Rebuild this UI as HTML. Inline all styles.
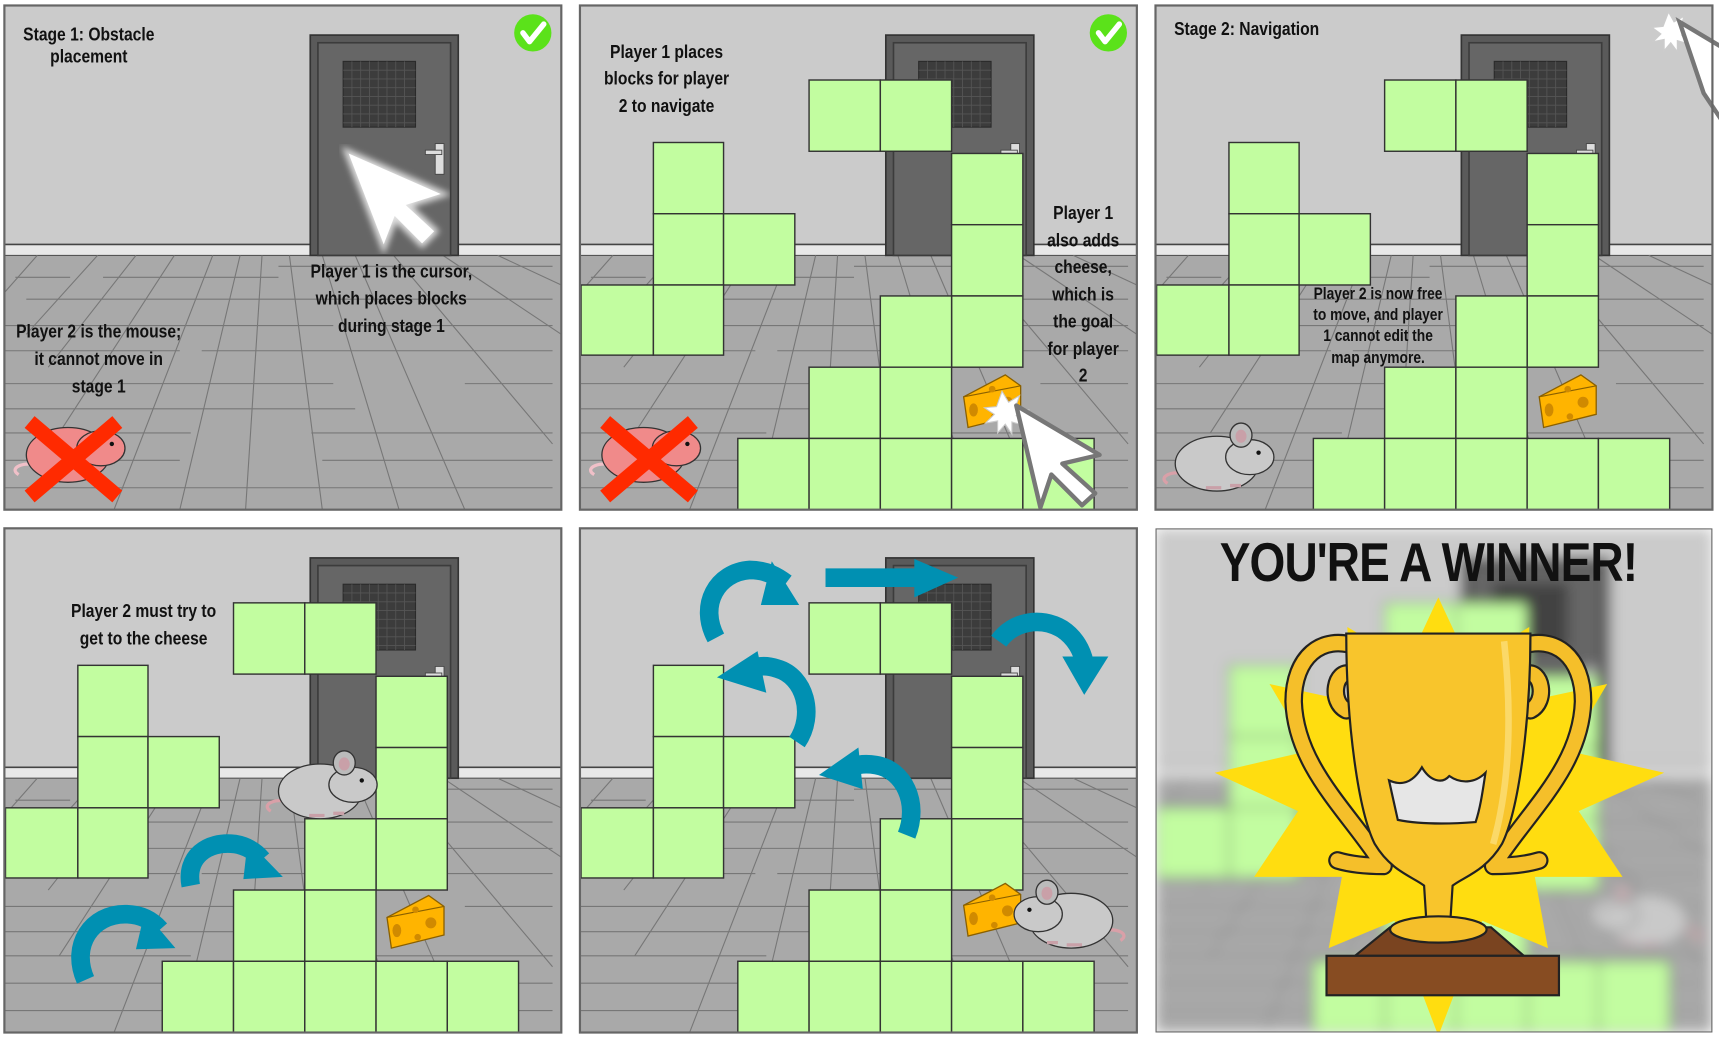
<!DOCTYPE html>
<html><head><meta charset="utf-8">
<style>
html,body{margin:0;padding:0;background:#fff;width:1719px;height:1038px;overflow:hidden}
svg{display:block}
text{font-family:"Liberation Sans Narrow","Liberation Sans","DejaVu Sans Condensed",sans-serif;font-weight:bold;fill:#111;text-anchor:middle;transform-box:fill-box;transform-origin:center;transform:scaleX(0.84)}
text.l{transform-origin:left center}
</style></head><body>
<svg width="1719" height="1038" viewBox="0 0 1568 947" preserveAspectRatio="none" xmlns="http://www.w3.org/2000/svg">
<defs>
<g id="room">
  <rect x="0" y="0" width="508" height="460" fill="#cbcbcb"/>
  <rect x="0" y="218" width="508" height="10" fill="#e8e8e8"/>
  <line x1="0" y1="218" x2="508" y2="218" stroke="#444" stroke-width="1.5"/>
  <rect x="0" y="228" width="508" height="232" fill="#a9a9a9"/>
  <line x1="0" y1="228" x2="508" y2="228" stroke="#555" stroke-width="1"/>
  <g stroke="#777" stroke-width="1" fill="none">
    <path d="M10 248H60M90 248H250M250 238H500M20 268H500M0 292H300M320 292H500M0 315H160M180 315H500M0 345H300M420 345H500M0 368H320M0 390H170M280 390H500M0 415H160M290 415H500M0 440H500"/>
    <path d="M30 228L0 262M85 228L20 300M120 228L40 330M155 228L50 390M190 228L100 460M215 228L160 460M235 228L220 460M260 228L290 460M290 228L360 460M320 228L420 460M355 228L500 400M400 228L508 300M450 228L508 255"/>
  </g>
  <rect x="279" y="27" width="135" height="201" fill="#5a5a5a" stroke="#333" stroke-width="1.5"/>
  <rect x="286" y="34" width="121" height="194" fill="#666" stroke="#3c3c3c" stroke-width="1.5"/>
  <rect x="309" y="51" width="66" height="60" fill="#3c3c3c" stroke="#2a2a2a"/>
  <g stroke="#555" stroke-width="0.8"><path d="M309 59H375M309 67H375M309 75H375M309 83H375M309 91H375M309 99H375M309 107H375M317 51V111M325 51V111M333 51V111M341 51V111M349 51V111M357 51V111M365 51V111"/></g>
  <rect x="393" y="126" width="8" height="28" fill="#ddd" stroke="#444" stroke-width="0.8"/>
  <rect x="384" y="132" width="15" height="4" fill="#ddd" stroke="#444" stroke-width="0.8"/>
</g>
<g id="blocks" fill="#c2fda0" stroke="#333" stroke-width="1.3">
  <rect x="209" y="68" width="65" height="65"/><rect x="274" y="68" width="65" height="65"/>
  <rect x="67" y="125" width="64" height="65"/><rect x="67" y="190" width="64" height="65"/><rect x="131" y="190" width="65" height="65"/>
  <rect x="1" y="255" width="66" height="64"/><rect x="67" y="255" width="64" height="64"/>
  <rect x="339" y="135" width="65" height="65"/><rect x="339" y="200" width="65" height="65"/><rect x="339" y="265" width="65" height="65"/><rect x="274" y="265" width="65" height="65"/>
  <rect x="209" y="330" width="65" height="65"/><rect x="274" y="330" width="65" height="65"/>
  <rect x="144" y="395" width="65" height="65"/><rect x="209" y="395" width="65" height="65"/><rect x="274" y="395" width="65" height="65"/><rect x="339" y="395" width="65" height="65"/><rect x="404" y="395" width="65" height="65"/>
</g>
<g id="mouse">
  <path d="M5 58C-5 52 10 45 25 50C35 55 45 60 60 58" fill="none" stroke="#d9a0a8" stroke-width="3"/>
  <ellipse cx="50" cy="40" rx="38" ry="25" fill="#c9c9c9" stroke="#333" stroke-width="1.2"/>
  <ellipse cx="80" cy="34" rx="22" ry="16" fill="#c9c9c9" stroke="#333" stroke-width="1.2"/>
  <ellipse cx="72" cy="14" rx="10" ry="11" fill="#bbb" stroke="#333" stroke-width="1.2"/>
  <ellipse cx="72" cy="15" rx="5" ry="6" fill="#c9a0a8"/>
  <circle cx="88" cy="30" r="2" fill="#111"/>
  <path d="M40 62h14M62 60h10" stroke="#c9a0a8" stroke-width="3"/>
</g>
<g id="pmouse">
  <path d="M5 58C-5 52 10 45 25 50C35 55 45 60 60 58" fill="none" stroke="#f0c0c8" stroke-width="3"/>
  <ellipse cx="50" cy="40" rx="38" ry="25" fill="#f08a8a" stroke="#333" stroke-width="1.2"/>
  <ellipse cx="80" cy="34" rx="22" ry="16" fill="#f08a8a" stroke="#333" stroke-width="1.2"/>
  <circle cx="90" cy="30" r="2" fill="#111"/>
  <path d="M15 10L95 78M95 10L15 78" stroke="#ff2a00" stroke-width="14"/>
</g>
<g id="cheese">
  <path d="M2 22L40 2L54 12L54 38L6 50Z" fill="#ffb400" stroke="#8a6000" stroke-width="1.2"/>
  <path d="M2 22L54 12" stroke="#8a6000" stroke-width="1"/>
  <ellipse cx="11" cy="34" rx="4" ry="6" fill="#d08a00"/><circle cx="42" cy="27" r="5" fill="#d08a00"/><circle cx="28" cy="15" r="3" fill="#d08a00"/><circle cx="30" cy="40" r="3" fill="#d08a00"/>
</g>
<g id="check"><circle r="17" fill="#5be21a"/><path d="M-9 0L-3 8L10 -8" fill="none" stroke="#fff" stroke-width="5" stroke-linecap="round" stroke-linejoin="round"/></g>
<filter id="bl"><feGaussianBlur stdDeviation="6"/></filter>
<filter id="glow"><feGaussianBlur stdDeviation="3"/></filter>
<clipPath id="c6"><rect x="1054" y="482" width="508" height="460"/></clipPath>
</defs>

<!-- Panel 1 -->
<g transform="translate(4,5)">
  <use href="#room"/>
  <use href="#check" x="482" y="25"/>
  <path d="M314 135L398 172L366 182L392 206L381 217L356 192L346 218Z" fill="#fff" stroke="#ddd" stroke-width="7" filter="url(#glow)"/>
  <path d="M314 135L398 172L366 182L392 206L381 217L356 192L346 218Z" fill="#fff"/>
  <use href="#pmouse" x="8" y="370"/>
  <text x="77" y="32" font-size="17">Stage 1: Obstacle</text>
  <text x="77" y="52" font-size="17">placement</text>
  <text x="353" y="248" font-size="17">Player 1 is the cursor,</text>
  <text x="353" y="273" font-size="17">which places blocks</text>
  <text x="353" y="298" font-size="17">during stage 1</text>
  <text x="86" y="303" font-size="17">Player 2 is the mouse;</text>
  <text x="86" y="328" font-size="17">it cannot move in</text>
  <text x="86" y="353" font-size="17">stage 1</text>
  <rect x="0" y="0" width="508" height="460" fill="none" stroke="#666" stroke-width="2"/>
</g>
<!-- Panel 2 -->
<g transform="translate(529,5)">
  <use href="#room"/>
  <use href="#blocks"/>
  <use href="#check" x="482" y="25"/>
  <use href="#pmouse" x="8" y="370"/>
  <use href="#cheese" x="348" y="335"/>
  <path d="M385 352l6 10 10-6-4 11 12 2-11 5 7 9-11-3 0 11-6-9-7 8 0-11-11 2 8-8-9-6 11-1z" fill="#fff" stroke="#ccc"/>
  <path d="M398 365L474 410L440 418L470 445L458 456L430 428L420 458Z" fill="#fff" stroke="#777" stroke-width="4" stroke-linejoin="round"/>
  <text x="79" y="48" font-size="17">Player 1 places</text>
  <text x="79" y="72" font-size="17">blocks for player</text>
  <text x="79" y="97" font-size="17">2 to navigate</text>
  <text x="459" y="195" font-size="17">Player 1</text>
  <text x="459" y="220" font-size="17">also adds</text>
  <text x="459" y="244" font-size="17">cheese,</text>
  <text x="459" y="269" font-size="17">which is</text>
  <text x="459" y="294" font-size="17">the goal</text>
  <text x="459" y="319" font-size="17">for player</text>
  <text x="459" y="343" font-size="17">2</text>
  <rect x="0" y="0" width="508" height="460" fill="none" stroke="#666" stroke-width="2"/>
</g>
<!-- Panel 3 -->
<g transform="translate(1054,5)">
  <use href="#room"/>
  <use href="#blocks"/>
  <use href="#cheese" x="348" y="335"/>
  <use href="#mouse" x="6" y="378"/>
  <path d="M468 6l5 9 9-5-3 10 11 2-10 5 6 8-10-3 0 10-6-8-6 7 0-10-10 2 7-7-8-6 10-1z" fill="#fff" stroke="#ccc"/>
  <path d="M478 15L520 40L520 110L500 80Z" fill="#fff" stroke="#777" stroke-width="4"/>
  <text class="l" x="17" y="27" font-size="17" style="text-anchor:start">Stage 2: Navigation</text>
  <text x="203" y="268" font-size="15">Player 2 is now free</text>
  <text x="203" y="287" font-size="15">to move, and player</text>
  <text x="203" y="306" font-size="15">1 cannot edit the</text>
  <text x="203" y="326" font-size="15">map anymore.</text>
  <rect x="0" y="0" width="508" height="460" fill="none" stroke="#666" stroke-width="2"/>
</g>
<!-- Panel 4 -->
<g transform="translate(4,482)">
  <use href="#room"/>
  <use href="#blocks"/>
  <use href="#mouse" x="238" y="200"/>
  <use href="#cheese" x="347" y="333"/>
  <g fill="none" stroke="#0090b2" stroke-width="17">
    <path d="M74 412C60 380 80 352 110 352C125 352 135 358 142 366"/>
    <path d="M170 326C165 300 185 285 210 288C222 290 230 296 235 302"/>
  </g>
  <g fill="#0090b2"><path d="M128 350L156 383L120 384Z"/><path d="M222 285L254 318L218 320Z"/></g>
  <text x="127" y="81" font-size="17">Player 2 must try to</text>
  <text x="127" y="106" font-size="17">get to the cheese</text>
  <rect x="0" y="0" width="508" height="460" fill="none" stroke="#666" stroke-width="2"/>
</g>
<!-- Panel 5 -->
<g transform="translate(529,482)">
  <use href="#room"/>
  <use href="#blocks"/>
  <use href="#cheese" x="348" y="322"/>
  <use href="#mouse" x="398" y="318" transform="translate(896,0) scale(-1,1)"/>
  <g fill="none" stroke="#0090b2" stroke-width="17">
    <path d="M124 100C108 70 125 40 155 38C170 38 180 44 188 50"/>
    <path d="M224 45H308"/>
    <path d="M198 195C215 170 205 135 180 128C168 124 160 126 150 130"/>
    <path d="M298 280C310 250 295 220 270 216C258 214 250 216 242 220"/>
    <path d="M382 103C395 85 420 80 440 92C452 100 458 112 460 122"/>
  </g>
  <g fill="#0090b2">
    <path d="M175 30L200 70L165 70Z"/><path d="M305 28L345 45L305 63Z"/>
    <path d="M162 112L125 136L170 150Z"/><path d="M254 200L218 225L258 238Z"/>
    <path d="M440 117L482 117L460 152Z"/>
  </g>
  <rect x="0" y="0" width="508" height="460" fill="none" stroke="#666" stroke-width="2"/>
</g>
<!-- Panel 6 -->
<g clip-path="url(#c6)">
  <g transform="translate(1054,482)" filter="url(#bl)">
    <use href="#room"/>
    <use href="#blocks"/>
    <use href="#mouse" x="398" y="318" transform="translate(896,0) scale(-1,1)"/>
  </g>
  <path d="M1312 545L1340 605L1395 572L1392 640L1466 624L1430 685L1518 705L1440 740L1480 800L1400 800L1412 865L1352 840L1312 945L1272 840L1212 865L1224 800L1144 800L1184 740L1108 705L1194 685L1158 624L1232 640L1229 572L1284 605Z" fill="#ffdd10"/>
  <g fill="none" stroke-linecap="round">
    <path d="M1238 590C1205 578 1180 600 1180 640C1182 700 1230 740 1262 790M1228 648C1212 640 1218 610 1232 615M1262 790C1245 790 1230 788 1220 785" stroke="#222" stroke-width="17"/>
    <path d="M1386 590C1419 578 1444 600 1444 640C1442 700 1394 740 1362 790M1396 648C1412 640 1406 610 1392 615M1362 790C1379 790 1394 788 1404 785" stroke="#222" stroke-width="17"/>
    <path d="M1238 590C1205 578 1180 600 1180 640C1182 700 1230 740 1262 790M1228 648C1212 640 1218 610 1232 615M1262 790C1245 790 1230 788 1220 785" stroke="#f5bf2a" stroke-width="13"/>
    <path d="M1386 590C1419 578 1444 600 1444 640C1442 700 1394 740 1362 790M1396 648C1412 640 1406 610 1392 615M1362 790C1379 790 1394 788 1404 785" stroke="#f5bf2a" stroke-width="13"/>
  </g>
  <g stroke="#222" stroke-width="2">
    <path d="M1228 578L1396 578C1396 660 1385 740 1370 770C1355 795 1335 800 1325 808L1322 855L1302 855L1299 808C1289 800 1269 795 1254 770C1239 740 1228 660 1228 578Z" fill="#f8c52c"/>
    <path d="M1372 585C1380 660 1376 720 1362 770" fill="none" stroke="#fbd968" stroke-width="6"/>
    <path d="M1267 712C1280 718 1290 712 1297 700C1304 712 1315 716 1322 708C1332 715 1345 715 1355 705C1352 725 1350 738 1346 750C1320 752 1295 752 1275 748C1272 735 1270 725 1267 712Z" fill="#e6e6e6"/>
    <path d="M1236 872L1268 846L1360 846L1390 872Z" fill="#7a4420"/>
    <ellipse cx="1312" cy="848" rx="44" ry="12" fill="#f5bf2a"/>
    <rect x="1210" y="872" width="212" height="36" fill="#874c22"/>
  </g>
  <text x="1303" y="530" font-size="50" style="font-weight:900;letter-spacing:-1px">YOU'RE A WINNER!</text>
  <rect x="1054" y="482" width="508" height="460" fill="none" stroke="#666" stroke-width="2"/>
</g>
</svg>
</body></html>
